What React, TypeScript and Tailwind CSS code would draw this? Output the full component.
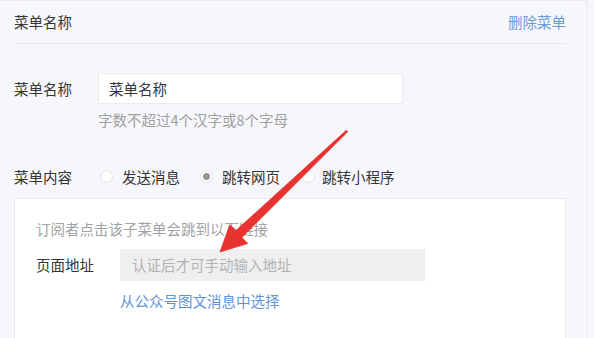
export default function App() {
  return (
    <div
      className="relative w-[594px] h-[338px] overflow-hidden bg-[#f6f7fb] text-[14.5px] text-[#353535]"
      style={{ fontFamily: '"Noto Sans CJK SC", "Noto Sans", sans-serif' }}
    >
      <div className="w-[588px] h-[338px] border-t border-r border-[#e9eaef] pl-[14px] pr-[21px]">
        {/* header */}
        <div className="flex h-[43px] items-center justify-between border-b border-[#e8e9ee]">
          <span>菜单名称</span>
          <span className="text-[#6b9bdb]">删除菜单</span>
        </div>

        {/* name */}
        <div className="mt-[29px] flex items-center">
          <span className="w-[84px]">菜单名称</span>
          <div className="flex h-[31px] w-[305px] items-center border border-[#ececef] bg-white px-[10px]">
            菜单名称
          </div>
        </div>
        <div className="ml-[84px] mt-[5px] text-[#a0a0a0]">字数不超过4个汉字或8个字母</div>

        {/* content type */}
        <div className="mt-[35px] flex items-center">
          <span className="w-[86px]">菜单内容</span>
          <label className="flex items-center">
            <span className="h-[13px] w-[13px] rounded-full border border-[#e2e2e6] bg-white" />
            <span className="ml-[9px]">发送消息</span>
          </label>
          <label className="ml-[20px] flex items-center">
            <span className="flex h-[13px] w-[13px] items-center justify-center rounded-full border border-[#e2e2e6] bg-white">
              <span className="h-[7px] w-[7px] rounded-full bg-[#949494]" />
            </span>
            <span className="ml-[9px]">跳转网页</span>
          </label>
          <label className="ml-[22px] flex items-center">
            <span className="h-[13px] w-[13px] rounded-full border border-[#e2e2e6] bg-white" />
            <span className="ml-[7px]">跳转小程序</span>
          </label>
        </div>

        {/* url box */}
        <div className="mt-[10px] h-[160px] border border-[#e8e9ee] bg-white pl-[21px] pt-[19px]">
          <div className="text-[#a3a3a3]">订阅者点击该子菜单会跳到以下链接</div>
          <div className="mt-[10px] flex items-center">
            <span className="w-[84px]">页面地址</span>
            <div className="flex h-[32px] w-[305px] items-center bg-[#efefef] px-[12px] text-[#b2b2b2]">
              认证后才可手动输入地址
            </div>
          </div>
          <div className="ml-[84px] mt-[9px] text-[#5f93d8]">从公众号图文消息中选择</div>
        </div>
      </div>

      {/* red annotation arrow */}
      <svg className="absolute left-0 top-0" width="594" height="338" viewBox="0 0 594 338">
        <polygon
          points="347.7,131.7 241.9,237.4 247.8,243.5 220,252 229.8,224.7 235.7,230.8 346.3,130.3"
          fill="#e8322f"
          stroke="#e8322f"
          strokeWidth="0.8"
          strokeLinejoin="round"
        />
      </svg>
    </div>
  );
}
